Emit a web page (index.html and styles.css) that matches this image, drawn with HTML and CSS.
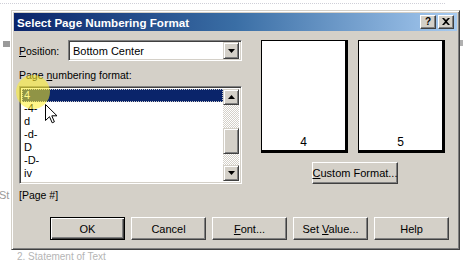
FILE: index.html
```html
<!DOCTYPE html>
<html>
<head>
<meta charset="utf-8">
<link rel="stylesheet" href="styles.css">
</head>
<body>
<div class="bg-dots"></div>
<div class="bg-marker"></div>
<div class="bg-marker right"></div>
<div class="bg-st">St</div>
<div class="dialog">
  <div class="titlebar">
    <span class="title">Select Page Numbering Format</span>
    <div class="tbtns">
      <span class="tbtn">?</span>
      <span class="tbtn x">
        <svg width="8" height="7" viewBox="0 0 8 7"><path d="M0 0h2l2 2 2-2h2L5 3.5 8 7H6L4 5 2 7H0l3-3.5z" fill="#000"/></svg>
      </span>
    </div>
  </div>
  <div class="content">
    <div class="main">
      <div class="left">
        <div class="row">
          <span class="label"><u>P</u>osition:</span>
          <div class="combo">
            <span class="combo-text">Bottom Center</span>
            <span class="sbtn"><svg width="7" height="4" viewBox="0 0 7 4"><path d="M0 0h7L3.5 4z" fill="#000"/></svg></span>
          </div>
        </div>
        <div class="lbl">Page <u>n</u>umbering format:</div>
        <div class="listbox">
          <ul class="items">
            <li class="sel">4</li>
            <li>-4-</li>
            <li>d</li>
            <li>-d-</li>
            <li>D</li>
            <li>-D-</li>
            <li>iv</li>
          </ul>
          <div class="scroll">
            <span class="sbtn sq"><svg width="7" height="4" viewBox="0 0 7 4"><path d="M0 4h7L3.5 0z" fill="#000"/></svg></span>
            <div class="track">
              <div class="thumb"></div>
            </div>
            <span class="sbtn sq"><svg width="7" height="4" viewBox="0 0 7 4"><path d="M0 0h7L3.5 4z" fill="#000"/></svg></span>
          </div>
        </div>
        <div class="preview-text">[Page #]</div>
      </div>
      <div class="right">
        <div class="pages">
          <div class="page"><span>4</span></div>
          <div class="page"><span>5</span></div>
        </div>
        <button class="btn custom"><u>C</u>ustom Format...</button>
      </div>
    </div>
    <div class="buttons">
      <button class="btn def">OK</button>
      <button class="btn">Cancel</button>
      <button class="btn"><u>F</u>ont...</button>
      <button class="btn">Set <u>V</u>alue...</button>
      <button class="btn">Help</button>
    </div>
  </div>
</div>
<div class="bg-bottom">2. Statement of Text</div>
<div class="highlight"></div>
<svg class="cursor" width="13" height="20" viewBox="0 0 13 20"><path d="M0.5 0.5V16.5L4.5 12.7L7.2 18.8L9.4 17.8L6.8 11.8H12z" fill="#fff" stroke="#000" stroke-width="1" stroke-linejoin="miter"/></svg>
</body>
</html>
```
FILE: styles.css
```css
* { box-sizing: border-box; }
html, body { margin: 0; padding: 0; }
body {
  width: 470px;
  height: 260px;
  background: #fff;
  font-family: "Liberation Sans", Arial, sans-serif;
  font-size: 10.5px;
  color: #000;
  position: relative;
  overflow: hidden;
  padding-top: 10px;
  padding-left: 11px;
}
u { text-decoration: underline; text-underline-offset: 1px; }

.bg-dots {
  position: absolute;
  left: 0; top: 3px;
  width: 445px; height: 1px;
  background: repeating-linear-gradient(90deg, #cfcfd8 0 1px, transparent 1px 2px);
}
.bg-marker {
  position: absolute;
  left: 3px; top: 41px;
  width: 7px; height: 6px;
  background: #9a9a9a;
}
.bg-marker.right { left: 460px; top: 40px; width: 3px; background: #b0b0b0; }
.bg-st {
  position: absolute;
  left: -1px; top: 189px;
  color: #9a9a9a;
  font-size: 11px;
}
.bg-bottom {
  margin-top: 2px;
  margin-left: 6px;
  color: #b5b5b5;
  font-size: 10px;
  line-height: 10px;
  white-space: nowrap;
}

.dialog {
  width: 449px;
  height: 240px;
  background: #d4d0c8;
  border: 1px solid;
  border-color: #d4d0c8 #404040 #404040 #d4d0c8;
  box-shadow: inset 1px 1px #fff, inset -1px -1px #808080;
  padding: 2px;
  display: flex;
  flex-direction: column;
}
.titlebar {
  height: 18px;
  background: linear-gradient(90deg, #0a246a 0%, #3a6ea5 50%, #a6caf0 100%);
  display: flex;
  align-items: center;
  justify-content: space-between;
  padding: 0 3px 0 3px;
}
.title {
  color: #fff;
  font-weight: bold;
  font-size: 11.6px;
  white-space: nowrap;
}
.tbtns { display: flex; gap: 2px; }
.tbtn {
  width: 16px; height: 14px;
  background: #d4d0c8;
  border: 1px solid;
  border-color: #fff #404040 #404040 #fff;
  box-shadow: inset -1px -1px #808080;
  display: flex;
  align-items: center;
  justify-content: center;
  font-weight: bold;
  font-size: 10px;
  line-height: 1;
  padding-bottom: 1px;
}

.content {
  flex: 1;
  display: flex;
  flex-direction: column;
  padding: 9px 8px 7px 5px;
}
.main { display: flex; gap: 19px; }
.left { width: 223px; display: flex; flex-direction: column; }
.row { display: flex; align-items: center; height: 21px; }
.label { width: 49px; }
.combo {
  flex: 1;
  height: 21px;
  background: #fff;
  border: 1px solid;
  border-color: #808080 #fff #fff #808080;
  box-shadow: inset 1px 1px #404040, inset -1px -1px #d4d0c8;
  display: flex;
  align-items: center;
  padding: 2px;
}
.combo-text { flex: 1; padding-left: 2px; font-size: 11px; }
.sbtn {
  width: 16px; height: 17px;
  background: #d4d0c8;
  border: 1px solid;
  border-color: #d4d0c8 #404040 #404040 #d4d0c8;
  box-shadow: inset 1px 1px #fff, inset -1px -1px #808080;
  display: flex;
  align-items: center;
  justify-content: center;
}
.sbtn.sq { height: 16px; }
.lbl { margin-top: 8px; height: 12px; line-height: 12px; }
.listbox {
  margin-top: 5px;
  height: 98px;
  background: #fff;
  border: 1px solid;
  border-color: #808080 #fff #fff #808080;
  box-shadow: inset 1px 1px #404040, inset -1px -1px #d4d0c8;
  padding: 2px;
  display: flex;
}
.items {
  list-style: none;
  margin: 0;
  padding: 0;
  flex: 1;
}
.items li {
  height: 13px;
  line-height: 13px;
  padding-left: 2px;
  font-size: 11px;
}
.items li.sel {
  background: #0a246a;
  color: #fff;
  outline: 1px dotted #c8c8c8;
  outline-offset: -1px;
}
.scroll {
  width: 16px;
  display: flex;
  flex-direction: column;
}
.track {
  flex: 1;
  background: repeating-conic-gradient(#d4d0c8 0 25%, #fff 0 50%) 0 0/2px 2px;
  padding-top: 23px;
}
.thumb {
  height: 26px;
  background: #d4d0c8;
  border: 1px solid;
  border-color: #d4d0c8 #404040 #404040 #d4d0c8;
  box-shadow: inset 1px 1px #fff, inset -1px -1px #808080;
}
.preview-text { margin-top: 5px; height: 12px; line-height: 12px; }

.right { width: 186px; display: flex; flex-direction: column; align-items: center; }
.pages { display: flex; gap: 10px; width: 100%; }
.page {
  width: 87px;
  height: 113px;
  background: #fff;
  border-style: solid;
  border-color: #000;
  border-width: 1px 3px 3px 1px;
  display: flex;
  align-items: flex-end;
  justify-content: center;
  font-size: 12px;
  padding-bottom: 1px;
}
.btn {
  font-family: inherit;
  font-size: 11px;
  color: #000;
  background: #d4d0c8;
  border: 1px solid;
  border-color: #fff #404040 #404040 #fff;
  box-shadow: inset -1px -1px #808080, inset 1px 1px #d4d0c8;
  padding: 0;
  margin: 0;
  white-space: nowrap;
}
.custom { width: 86px; height: 22px; margin-top: 9px; margin-left: 1px; }
.buttons {
  margin-top: auto;
  display: flex;
  justify-content: flex-end;
  gap: 6px;
}
.buttons .btn { width: 75px; height: 23px; }
.btn.def {
  border: 1px solid #000;
  box-shadow: inset 1px 1px #fff, inset -1px -1px #404040, inset -2px -2px #808080;
}

.highlight {
  position: absolute;
  left: 16px; top: 75px;
  width: 34px; height: 34px;
  border-radius: 50%;
  background: rgba(255, 240, 40, 0.55);
}
.cursor {
  position: absolute;
  left: 45px; top: 104px;
}
```
